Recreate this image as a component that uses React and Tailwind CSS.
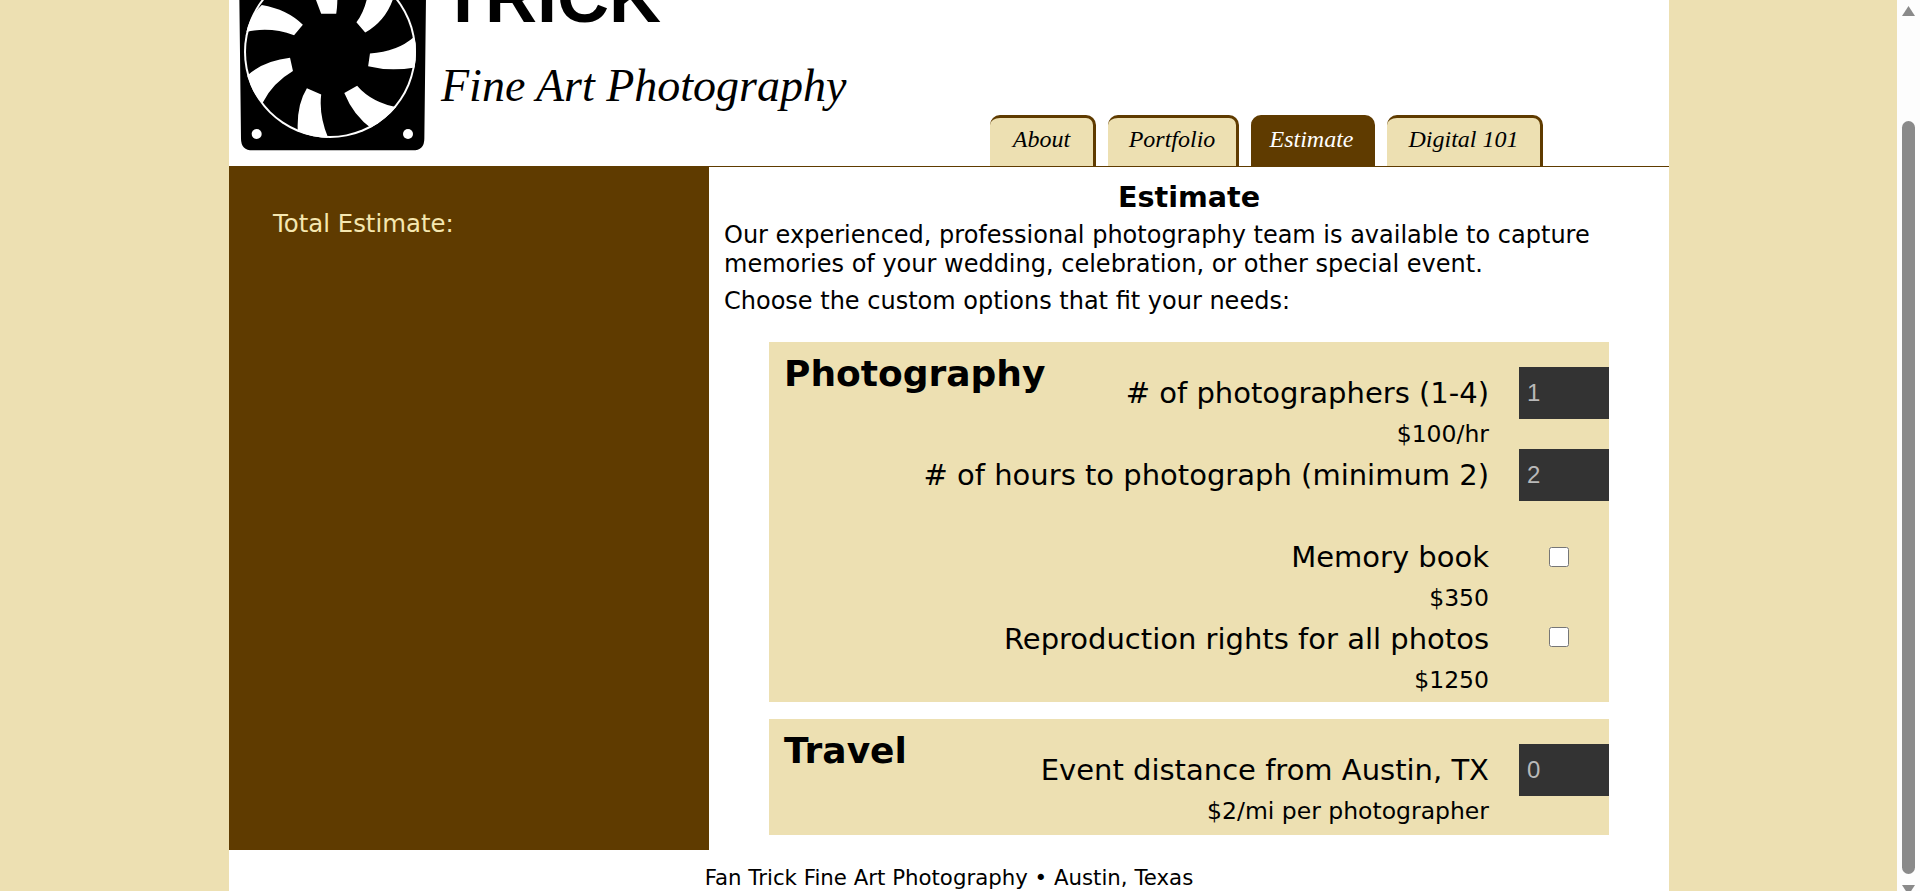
const TABS = [
  { label: 'About', width: 'w-[106px]' },
  { label: 'Portfolio', width: 'w-[131px]' },
  { label: 'Estimate', width: 'w-[124px]', active: true },
  { label: 'Digital 101', width: 'w-[156px]' },
]

function FanLogo() {
  return (
    <svg viewBox="0 0 630 480" className="w-[210px] h-[160px] shrink-0 ml-px">
      <defs>
        <clipPath id="fan-ring">
          <circle cx="300" cy="156" r="258" />
        </clipPath>
      </defs>
      <path d="M28 -10 H588 L583 416 Q583 451 548 451 H68 Q33 451 33 416 Z" fill="#000" />
      <circle cx="300" cy="156" r="258" fill="#fff" />
      <circle cx="300" cy="156" r="252" fill="#000" />
      <g clipPath="url(#fan-ring)">
        <g fill="#fff" transform="translate(300 156) scale(1.1) translate(-306 -166)">
          <path d="M120 38 Q190 50 232 92 L208 120 Q140 95 75 112 Q90 65 120 38 Z" />
          <path d="M197 182 L205 218 Q150 250 122 305 Q85 270 78 232 Q125 190 197 182 Z" />
          <path d="M243 265 L282 282 Q275 340 303 405 Q250 400 218 380 Q215 310 243 265 Z" />
          <path d="M345 278 L380 258 Q420 305 495 318 Q465 355 420 375 Q370 340 345 278 Z" />
          <path d="M415 170 Q490 165 535 125 Q555 170 538 208 Q470 220 410 205 Z" />
          <path d="M378 85 Q405 50 412 -10 L450 -10 Q470 0 480 15 Q460 80 402 113 Z" />
          <path d="M282 62 L323 62 Q328 30 325 -10 L255 -10 Q270 30 282 62 Z" />
        </g>
      </g>
      <circle cx="80" cy="402" r="15" fill="#fff" />
      <circle cx="534" cy="402" r="15" fill="#fff" />
    </svg>
  )
}

function Row({ label, sub, children }) {
  return (
    <div className="h-[82px]">
      <div className="flex justify-end items-center h-[52px] gap-[30px]">
        <span className="text-[29px] leading-none whitespace-nowrap">{label}</span>
        <div className="w-[90px] h-[52px] flex items-center justify-center shrink-0">{children}</div>
      </div>
      {sub && <div className="text-[23.5px] leading-[30px] text-right pr-[120px]">{sub}</div>}
    </div>
  )
}

function NumberField({ value }) {
  return (
    <input
      type="text"
      defaultValue={value}
      className="w-[90px] h-[52px] bg-[#333333] text-[#b9b9b9] text-[24px] pl-2 outline-none font-['Liberation_Sans',sans-serif]"
    />
  )
}

export default function App() {
  return (
    <div className="flex h-[891px] overflow-hidden bg-[#ede0b2] text-black font-['DejaVu_Sans',sans-serif]">
      <div className="w-[1897px] shrink-0">
        <div className="ml-[229px] w-[1440px] h-[891px] bg-white overflow-hidden">
          {/* Header, the page is scrolled so the logo is cut off at the top */}
          <header className="flex h-[167px] border-b border-[#5f3b00] overflow-hidden">
            <FanLogo />
            <div className="ml-px w-[440px] shrink-0">
              <div className="-mt-[38px] h-[62px] text-[72px] leading-[70px] font-bold font-['Liberation_Sans',sans-serif]">
                TRICK
              </div>
              <div className="mt-[34px] text-[46px] leading-[56px] italic whitespace-nowrap font-['Liberation_Serif',serif]">
                Fine Art Photography
              </div>
            </div>
            <nav className="flex gap-3 self-end ml-[109px]">
              {TABS.map((tab) => (
                <a
                  key={tab.label}
                  className={`${tab.width} h-[51px] flex justify-center pt-[5px] rounded-t-[10px] border-t-[3px] border-r-[3px] border-[#5f3b00] text-[24px] leading-[32px] italic whitespace-nowrap font-['Liberation_Serif',serif] ${
                    tab.active ? 'bg-[#5f3b00] text-white' : 'bg-[#ede0b2] text-black'
                  }`}
                >
                  {tab.label}
                </a>
              ))}
            </nav>
          </header>

          <div className="flex h-[683px]">
            <aside className="w-[480px] shrink-0 bg-[#5f3b00] pl-[44px] pt-[43px] text-[#f5e7b0] text-[24.4px] leading-[28px]">
              Total Estimate:
            </aside>

            <main className="w-[960px] px-[15px]">
              <h1 className="mt-[14px] text-center text-[28.6px] leading-[32px] font-bold">Estimate</h1>
              <p className="mt-[8px] text-[24px] leading-[29px]">
                Our experienced, professional photography team is available to capture
                <br />
                memories of your wedding, celebration, or other special event.
              </p>
              <p className="mt-[8px] text-[24px] leading-[29px]">Choose the custom options that fit your needs:</p>

              <section className="mt-[26px] mx-[45px] h-[360px] bg-[#ede0b2] pl-[15px] pt-[9px]">
                <h2 className="float-left h-[46px] text-[36px] leading-[46px] font-bold">Photography</h2>
                <div className="pt-[16px]">
                  <Row label="# of photographers (1-4)" sub="$100/hr">
                    <NumberField value="1" />
                  </Row>
                  <Row label="# of hours to photograph (minimum 2)">
                    <NumberField value="2" />
                  </Row>
                  <Row label="Memory book" sub="$350">
                    <input type="checkbox" className="w-[20px] h-[20px] mr-[10px] mb-[1px]" />
                  </Row>
                  <Row label="Reproduction rights for all photos" sub="$1250">
                    <input type="checkbox" className="w-[20px] h-[20px] mr-[10px] mb-[5px]" />
                  </Row>
                </div>
              </section>

              <section className="mt-[17px] mx-[45px] h-[116px] bg-[#ede0b2] pl-[15px] pt-[9px]">
                <h2 className="float-left h-[46px] text-[36px] leading-[46px] font-bold">Travel</h2>
                <div className="pt-[16px]">
                  <Row label="Event distance from Austin, TX" sub="$2/mi per photographer">
                    <NumberField value="0" />
                  </Row>
                </div>
              </section>
            </main>
          </div>

          <footer className="pt-[14px] text-center text-[21.3px] leading-[28px]">
            Fan Trick Fine Art Photography • Austin, Texas
          </footer>
        </div>
      </div>

      {/* Browser scrollbar */}
      <div className="w-[23px] h-[891px] bg-[#fdfdfd] pl-[5px] overflow-hidden">
        <svg viewBox="0 0 13 10" className="w-[13px] h-[10px] mt-[6px] block">
          <path d="M6.5 0 L13 10 H0 Z" fill="#8a8a8a" />
        </svg>
        <div className="w-[13px] h-[753px] mt-[105px] rounded-full bg-[#8a8a8a]" />
        <svg viewBox="0 0 13 10" className="w-[13px] h-[10px] mt-[11px] block">
          <path d="M0 0 H13 L6.5 10 Z" fill="#8a8a8a" />
        </svg>
      </div>
    </div>
  )
}
